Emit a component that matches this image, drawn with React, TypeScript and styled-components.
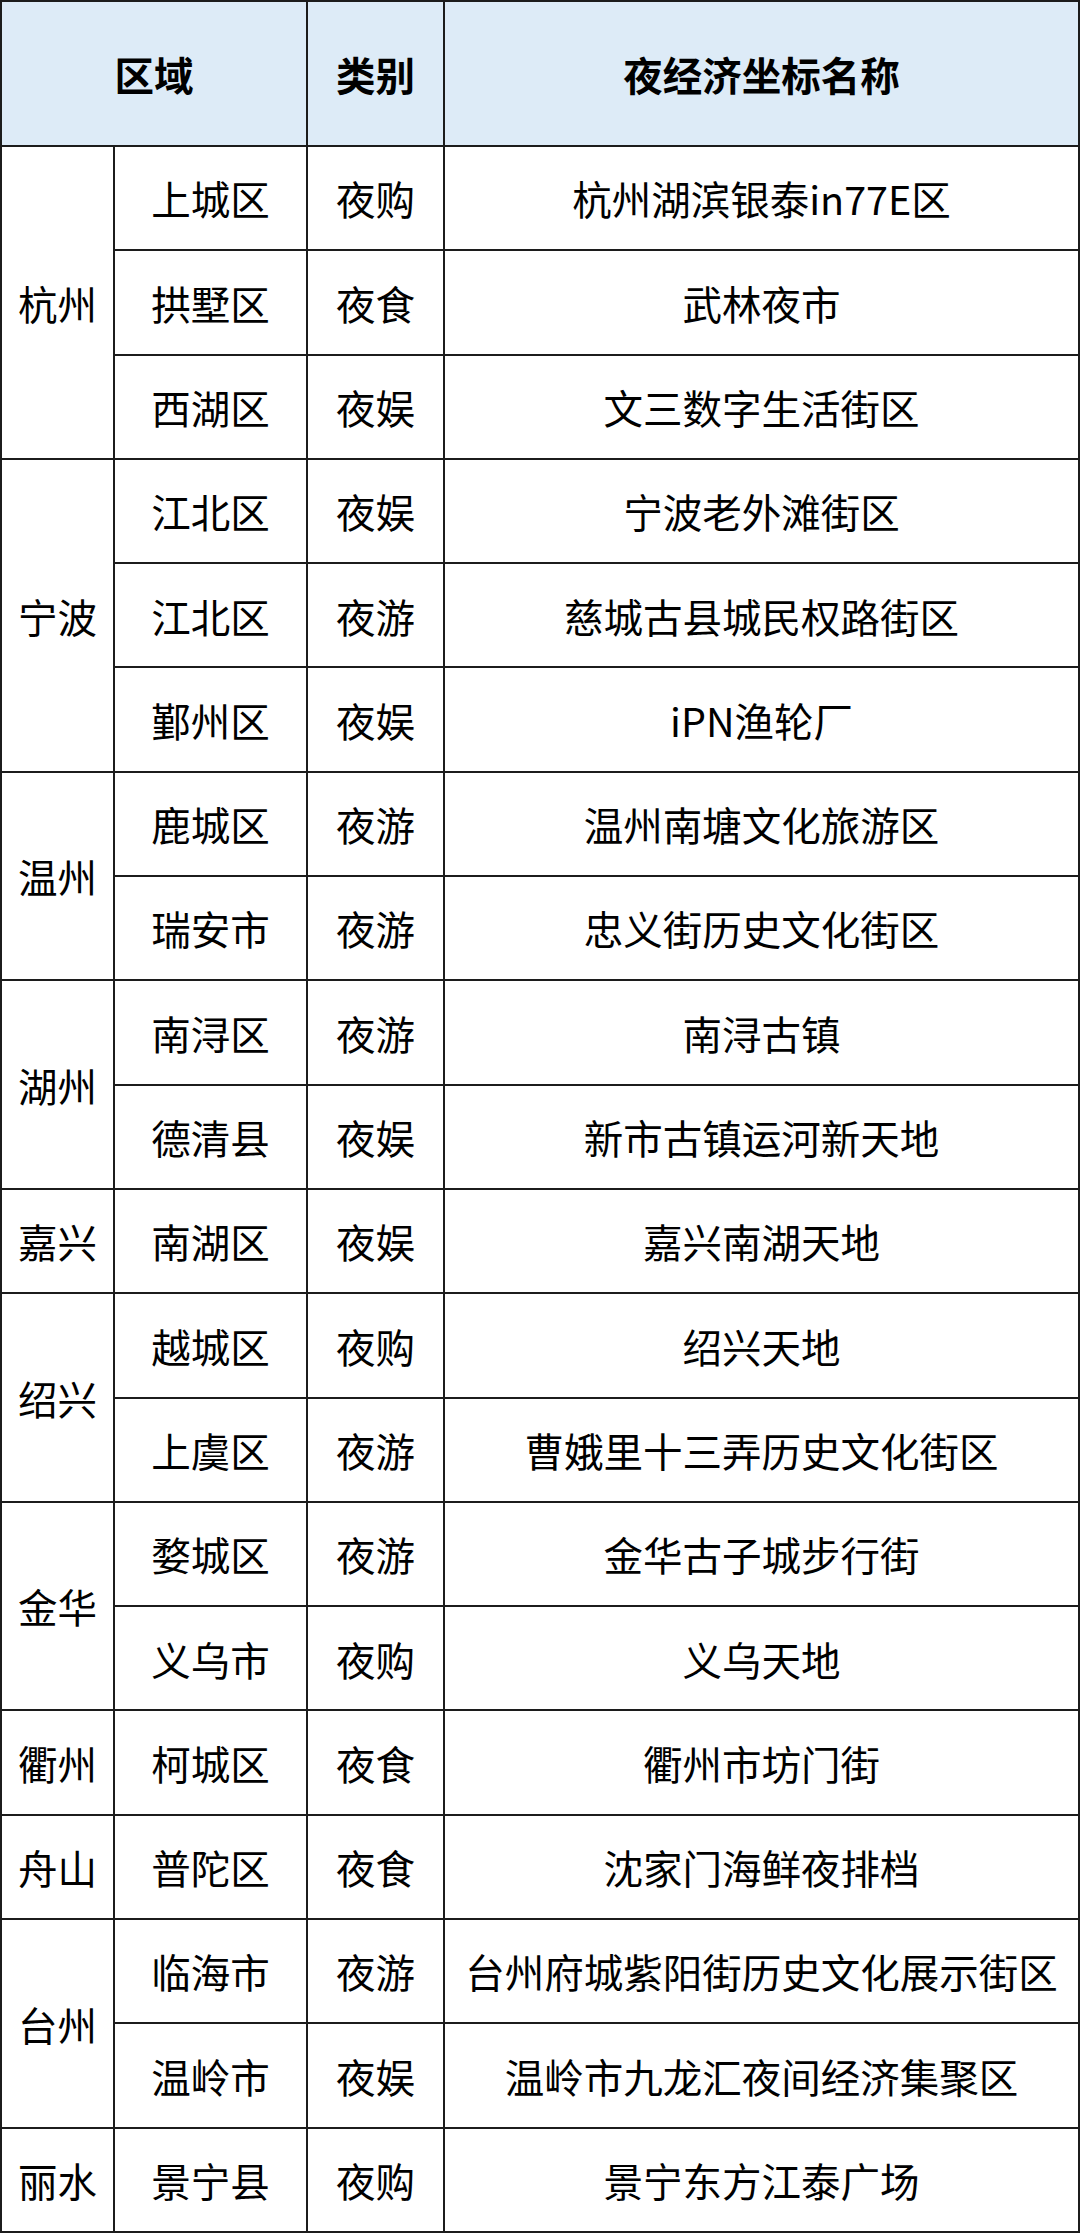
import styled, { createGlobalStyle } from 'styled-components'

const GlobalStyle = createGlobalStyle`
  html, body { margin: 0; padding: 0; background: #fff; }
  body { font-family: 'Noto Sans CJK SC', 'Noto Sans', sans-serif; }
`

type Spot = { district: string; kind: string; name: string }
type City = { city: string; spots: Spot[] }

const DATA: City[] = [
  { city: '杭州', spots: [
    { district: '上城区', kind: '夜购', name: '杭州湖滨银泰in77E区' },
    { district: '拱墅区', kind: '夜食', name: '武林夜市' },
    { district: '西湖区', kind: '夜娱', name: '文三数字生活街区' },
  ] },
  { city: '宁波', spots: [
    { district: '江北区', kind: '夜娱', name: '宁波老外滩街区' },
    { district: '江北区', kind: '夜游', name: '慈城古县城民权路街区' },
    { district: '鄞州区', kind: '夜娱', name: 'iPN渔轮厂' },
  ] },
  { city: '温州', spots: [
    { district: '鹿城区', kind: '夜游', name: '温州南塘文化旅游区' },
    { district: '瑞安市', kind: '夜游', name: '忠义街历史文化街区' },
  ] },
  { city: '湖州', spots: [
    { district: '南浔区', kind: '夜游', name: '南浔古镇' },
    { district: '德清县', kind: '夜娱', name: '新市古镇运河新天地' },
  ] },
  { city: '嘉兴', spots: [
    { district: '南湖区', kind: '夜娱', name: '嘉兴南湖天地' },
  ] },
  { city: '绍兴', spots: [
    { district: '越城区', kind: '夜购', name: '绍兴天地' },
    { district: '上虞区', kind: '夜游', name: '曹娥里十三弄历史文化街区' },
  ] },
  { city: '金华', spots: [
    { district: '婺城区', kind: '夜游', name: '金华古子城步行街' },
    { district: '义乌市', kind: '夜购', name: '义乌天地' },
  ] },
  { city: '衢州', spots: [
    { district: '柯城区', kind: '夜食', name: '衢州市坊门街' },
  ] },
  { city: '舟山', spots: [
    { district: '普陀区', kind: '夜食', name: '沈家门海鲜夜排档' },
  ] },
  { city: '台州', spots: [
    { district: '临海市', kind: '夜游', name: '台州府城紫阳街历史文化展示街区' },
    { district: '温岭市', kind: '夜娱', name: '温岭市九龙汇夜间经济集聚区' },
  ] },
  { city: '丽水', spots: [
    { district: '景宁县', kind: '夜购', name: '景宁东方江泰广场' },
  ] },
]

export default function App() {
  return (
    <>
      <GlobalStyle />
      <Table>
        <colgroup>
          <col style={{ width: 113 }} />
          <col style={{ width: 193 }} />
          <col style={{ width: 137 }} />
          <col />
        </colgroup>
        <thead>
          <HeadRow>
            <Th colSpan={2}>区域</Th>
            <Th>类别</Th>
            <Th>夜经济坐标名称</Th>
          </HeadRow>
        </thead>
        <tbody>
          {DATA.map(group =>
            group.spots.map((s, i) => (
              <Row key={group.city + i}>
                {i === 0 && <Td rowSpan={group.spots.length}>{group.city}</Td>}
                <Td>{s.district}</Td>
                <Td>{s.kind}</Td>
                <Td>{s.name}</Td>
              </Row>
            ))
          )}
        </tbody>
      </Table>
    </>
  )
}

const Table = styled.table`
  width: 1080px;
  height: 2233px;
  table-layout: fixed;
  border-collapse: collapse;
  color: #000;
  font-size: 39.5px;
  line-height: 1;
`

const HeadRow = styled.tr`
  height: 145px;
  background: #ddebf7;
`

const Row = styled.tr`
  height: 104px;
`

const Th = styled.th`
  border: 2px solid #1c1c1c;
  font-weight: 700;
  text-align: center;
  vertical-align: middle;
  padding: 0;
  white-space: nowrap;
`

const Td = styled.td`
  border: 2px solid #1c1c1c;
  font-weight: 400;
  text-align: center;
  vertical-align: middle;
  padding: 0;
  white-space: nowrap;
`
